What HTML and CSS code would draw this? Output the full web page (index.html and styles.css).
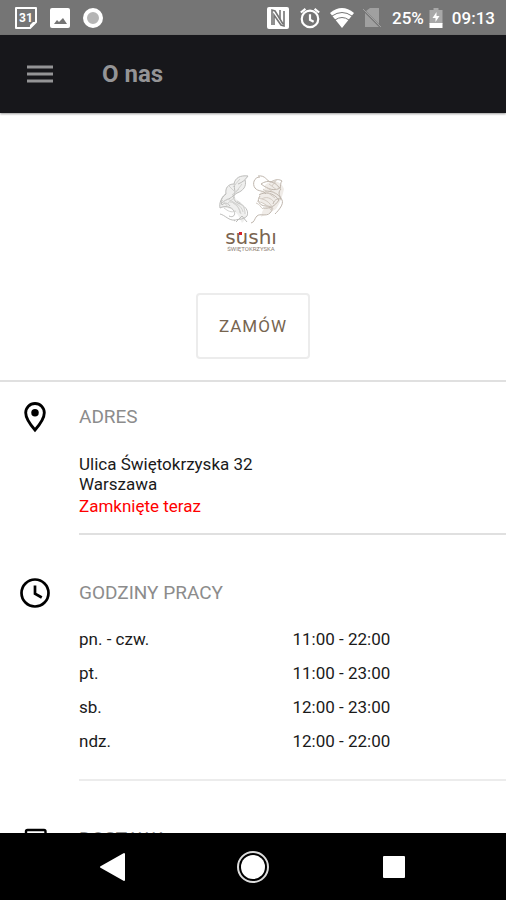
FILE: index.html
```html
<!DOCTYPE html>
<html lang="pl">
<head>
    <meta charset="UTF-8">
    <meta name="viewport" content="width=device-width, initial-scale=1.0">
    <title>O nas</title>
    <link rel="stylesheet" href="styles.css">
</head>
<body>
    <div class="status-bar">
        <div class="status-left">
            <svg width="24" height="24" viewBox="0 0 24 24">
                <path d="M2 2h20v14l-6 6H2z" fill="none" stroke="#fff" stroke-width="2" stroke-linejoin="round"/>
                <path d="M22 16l-6 6v-3l3-3z" fill="#fff"/>
                <text class="calendar-day" x="12" y="16" text-anchor="middle">31</text>
            </svg>
            <svg width="20" height="20" viewBox="0 0 20 20">
                <rect width="20" height="20" rx="2" fill="#fff"/>
                <path d="M4 16l3-4 2 2 4-4 4 6z" fill="#757575"/>
            </svg>
            <svg width="22" height="22" viewBox="0 0 22 22">
                <circle cx="11" cy="11" r="8" fill="#b5b5b5" stroke="#fff" stroke-width="4"/>
            </svg>
        </div>
        <div class="status-right">
            <svg width="24" height="24" viewBox="0 0 24 24">
                <rect x="1" y="1" width="22" height="22" rx="2" fill="#fff"/>
                <path d="M6 19V4l3 1 8 13M18 5v15l-3-1L8 9v10" fill="none" stroke="#757575" stroke-width="1.600"/>
                <path d="M14 4v9" fill="none" stroke="#757575" stroke-width="1.600"/>
            </svg>
            <svg width="22" height="22" viewBox="0 0 24 24" fill="none" stroke="#fff" stroke-width="2.400">
                <circle cx="12" cy="13" r="9"/>
                <path d="M12 8v6l4 2M2 6l5-4M22 6l-5-4"/>
            </svg>
            <svg width="24" height="20" viewBox="0 0 24 20">
                <path d="M0 5Q12-5 24 5L12 20z" fill="#fff"/>
                <path d="M2 8q10-7 20 0M5 12q7-5 14 0" fill="none" stroke="#757575" stroke-width="1"/>
            </svg>
            <svg width="18" height="20" viewBox="0 0 18 20">
                <path d="M7 0h9v16L3 3zM2 5l14 14H2z" fill="#a0a0a0"/>
                <path d="M0 1l18 18" stroke="#a0a0a0" stroke-width="1"/>
            </svg>
            <span class="battery-level">25%</span>
            <svg width="14" height="20" viewBox="0 0 13 20">
                <path d="M0 2h4V0h5v2h4v14H0z" fill="#a8a8a8"/>
                <path d="M0 15h13v5H0zM7 4l-4 6h3v4l4-6H7z" fill="#fff"/>
            </svg>
            <span>09:13</span>
        </div>
    </div>

    <header class="app-bar">
        <button type="button" class="menu-btn" aria-label="Menu">
            <svg width="26" height="18" viewBox="0 0 26 18">
                <path d="M0 2h26M0 9h26M0 16h26" stroke="#949496" stroke-width="3"/>
            </svg>
        </button>
        <h1>O nas</h1>
    </header>

    <main class="content">
        <div class="hero">
            <svg class="logo" width="72" height="82" viewBox="0 0 72 82">
                <!-- left koi -->
                <path d="M31 4c-8-1-13 2-14 8-6 0-9 4-8 10-5 4-7 9-6 14 7-1 14 1 18 7l4 8c6-5 5-14 0-19-3-4-8-4-7-9 6-4 11-8 10-13z" fill="#efefee"/>
                <g fill="none" stroke="#bdbdbb" stroke-width="1">
                    <path d="M31 4c-8-1-13 2-14 8-6 0-9 4-8 10-5 4-7 9-6 14M31 4c-3 4-5 6-10 8M28 8c2 6-2 11-8 13-5 2-4 8 1 10 7 3 11 7 9 13-5 5-10 2-13 5M18 12c-2 5 2 8-2 12s-8 3-12 8M9 22c-4 2-6 7-4 11 3-3 6-2 8 1M3 36c5-3 12-1 14 3s-1 7-5 5M3 42c5 1 9 7 15 6M19 50l6-6 5 6"/>
                </g>
                <g fill="none" stroke="#d2d2d0" stroke-width="1">
                    <path d="M22 17l-7 6M25 12l-6 8M18 25l-8 7M13 30c5 0 12 4 13 10M10 27c6 2 12 6 13 14M7 36c4 3 7 5 12 3M16 31c4 2 7 6 8 11M20 29c6 3 8 7 8 13M5 28l7 8M12 14l6 6M23 7l-7 8"/>
                </g>
                <!-- right koi -->
                <path d="M48 13c6-6 16-5 19 4-2 9-4 14-8 20-6 4-10 5-15 8 1-7 3-8 5-11-5-3-9-8-6-13 3-3 6-4 5-8z" fill="#f0ece8"/>
                <g fill="none" stroke="#bfb6ad" stroke-width="1">
                    <path d="M43 5c-6 0-8 7-5 11s9 2 11 6M41 4c8-1 8 5 13 6 5-3 8-3 11-1-2 2-1 5-2 8M44 12c7-5 14-2 19 4-5 3-11 2-19-4M48 19c7 0 13 2 16 8-5-1-7 2-8 5M42 23c6-4 15-2 20 5-4 6-9 9-16 8M43 24c-4 5 0 10 6 10s8 3 4 7-10 0-13 3-2 6-6 7M64 17c-4 4-1 7 1 11s-3 10-7 14"/>
                </g>
                <g fill="none" stroke="#d3cbc3" stroke-width="1">
                    <path d="M45 27c4-3 9-1 12 3M39 31c4 1 4 4 7 6M52 12l8 6M49 15l10 7M46 17l12 9M41 26c7 1 12 4 15 11M40 29c8 2 12 6 14 9M60 7l-5 7M56 8l7 9"/>
                </g>
                <text class="logo-name" x="34" y="72" text-anchor="middle">sushı</text>
                <text class="logo-street" x="34" y="79" text-anchor="middle">ŚWIĘTOKRZYSKA</text>
                <path d="M22 60h3v3h-3z" fill="#d3232a"/>
            </svg>
            <button type="button" class="btn-order">ZAMÓW</button>
        </div>

        <section class="info">
            <svg class="info-icon" width="36" height="36" viewBox="0 0 24 24">
                <path d="M12 3C8.500 3 5.800 5.700 5.800 9.200 5.800 13.600 12 20.700 12 20.700s6.200-7.100 6.200-11.500C18.200 5.700 15.500 3 12 3z" fill="none" stroke="#000" stroke-width="1.900"/>
                <circle cx="12" cy="9.200" r="2.500"/>
            </svg>
            <div class="info-body">
                <h2>ADRES</h2>
                <address>Ulica Świętokrzyska 32<br>Warszawa</address>
                <p class="closed">Zamknięte teraz</p>
            </div>
        </section>

        <section class="info">
            <svg class="info-icon" width="36" height="36" viewBox="0 0 24 24" fill="none" stroke="#000" stroke-width="1.800">
                <circle cx="12" cy="12" r="9"/>
                <path d="M12 7v5.500l4.500 2.500"/>
            </svg>
            <div class="info-body info-hours">
                <h2>GODZINY PRACY</h2>
                <table class="hours">
                    <tr><th scope="row">pn. - czw.</th><td>11:00 - 22:00</td></tr>
                    <tr><th scope="row">pt.</th><td>11:00 - 23:00</td></tr>
                    <tr><th scope="row">sb.</th><td>12:00 - 23:00</td></tr>
                    <tr><th scope="row">ndz.</th><td>12:00 - 22:00</td></tr>
                </table>
            </div>
        </section>

        <section class="info">
            <svg class="info-icon" width="36" height="36" viewBox="0 0 24 24">
                <rect x="6" y="6" width="13" height="15" rx="1" fill="none" stroke="#000" stroke-width="1.600"/>
            </svg>
            <div class="info-body">
                <h2>DOSTAWA</h2>
            </div>
        </section>
    </main>

    <nav class="nav-bar">
        <button type="button" aria-label="Wstecz">
            <svg width="32" height="32" viewBox="0 0 32 32">
                <path d="M27 3v26L4 16z" fill="#fff" stroke="#fff" stroke-width="2" stroke-linejoin="round"/>
            </svg>
        </button>
        <button type="button" aria-label="Ekran główny">
            <svg width="32" height="32" viewBox="0 0 32 32">
                <circle cx="16" cy="16" r="15" fill="none" stroke="#ddd" stroke-width="2"/>
                <circle cx="16" cy="16" r="12" fill="#fff"/>
            </svg>
        </button>
        <button type="button" aria-label="Ostatnie">
            <svg width="32" height="32" viewBox="0 0 32 32">
                <rect x="6" y="5" width="22" height="22" rx="1" fill="#fff"/>
            </svg>
        </button>
    </nav>
</body>
</html>
```
FILE: styles.css
```css
* {
    box-sizing: border-box;
    margin: 0;
    padding: 0;
}

body {
    display: flex;
    flex-direction: column;
    height: 100vh;
    background: #fff;
    color: #1a1a1a;
    font-family: Roboto, sans-serif;
    font-size: 17px;
    line-height: 20px;
}

svg {
    display: block;
    flex: none;
}

button {
    border: none;
    background: none;
    font-family: inherit;
    cursor: pointer;
}

/* Status bar */
.status-bar {
    display: flex;
    flex: none;
    align-items: center;
    justify-content: space-between;
    height: 35px;
    padding: 0 11px 0 14px;
    background: #757575;
    color: #fff;
    font-size: 17px;
    font-weight: 500;
}

.status-left,
.status-right {
    display: flex;
    align-items: center;
}

.status-left {
    gap: 12px;
}

.status-right {
    gap: 9px;
}

.battery-level {
    margin: 0 -4px 0 2px;
}

.calendar-day {
    fill: #fff;
    font-size: 12px;
    font-weight: 700;
}

/* App bar */
.app-bar {
    display: flex;
    flex: none;
    align-items: center;
    gap: 49px;
    height: 78px;
    padding: 0 27px;
    background: #17171b;
    box-shadow: 0 1px 2px rgba(0, 0, 0, 0.4);
    z-index: 1;
}

.app-bar h1 {
    color: #949496;
    font-size: 24px;
    font-weight: 700;
    line-height: 28px;
}

/* Content */
.content {
    flex: 1;
    min-height: 0;
    overflow-y: auto;
    scrollbar-width: none;
}

.hero {
    display: flex;
    flex-direction: column;
    align-items: center;
    gap: 39px;
    padding: 59px 0 21px;
    border-bottom: 2px solid #e0e0e0;
}

.logo-name {
    fill: #7a6450;
    font-family: "DejaVu Sans", sans-serif;
    font-size: 20px;
}

.logo-street {
    fill: #8d8074;
    font-size: 6px;
}

.btn-order {
    padding: 21px;
    border: 2px solid #ececec;
    border-radius: 4px;
    color: #77654f;
    font-size: 17px;
    line-height: 20px;
    letter-spacing: 1px;
}

.info {
    display: flex;
    gap: 26px;
    padding: 17px 0 0 17px;
}

.info-body {
    flex: 1;
    padding-bottom: 17px;
    border-bottom: 2px solid #e0e0e0;
}

.info + .info {
    padding-top: 40px;
}

.info h2 {
    margin-bottom: 19px;
    color: #8c8c8c;
    font-size: 19px;
    font-weight: 400;
    line-height: 36px;
}

.info-hours {
    padding-bottom: 21px;
    border-bottom-color: #ececec;
}

.info-hours h2 {
    margin-bottom: 11px;
}

address {
    font-style: normal;
}

.closed {
    margin-top: 2px;
    color: #f00;
}

.hours {
    width: 100%;
    border-collapse: collapse;
    table-layout: fixed;
}

.hours th,
.hours td {
    height: 34px;
    font-weight: 400;
    text-align: left;
}

/* Navigation bar */
.nav-bar {
    display: flex;
    flex: none;
    align-items: center;
    justify-content: center;
    gap: 108px;
    height: 67px;
    background: #000;
}
```
